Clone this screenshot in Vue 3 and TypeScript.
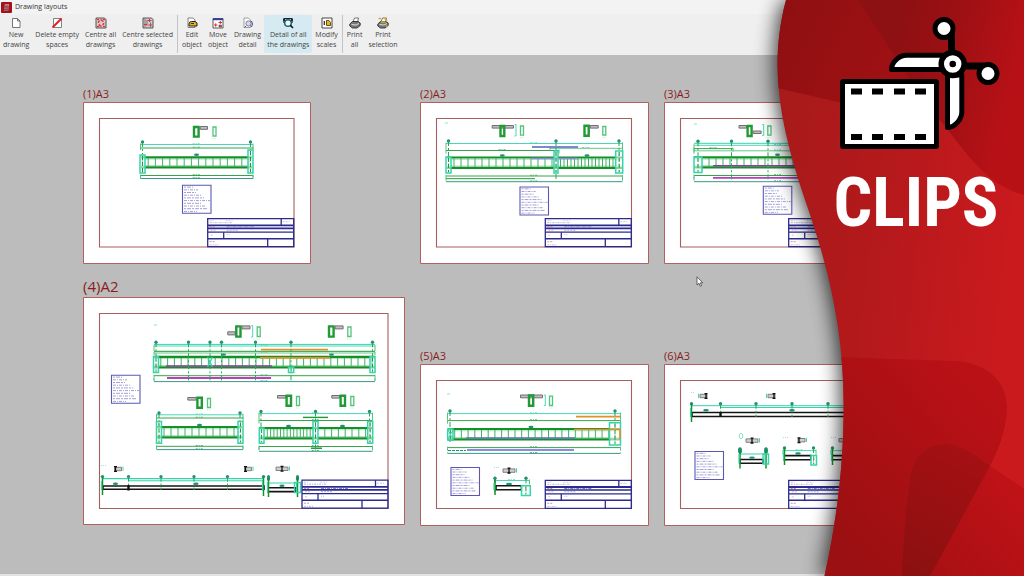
<script setup lang="ts">
interface Shape {
  d: string
  c: string
  w?: number
  f?: string
  dash?: string
}

interface Sheet {
  name: string
  large?: boolean
  x: number
  y: number
  w: number
  h: number
  shapes: Shape[]
}

interface Tool {
  icon: string
  lines: [string, string]
  active?: boolean
}

const GREEN = '#1f9a34'
const DARK = '#159027'
const LIGHT = '#52c47b'
const AQUA = '#35d3ae'
const TEAL = '#1f8f78'
const NAVY = '#2b2b8f'
const INK = '#a3a1d6'
const MAGENTA = '#b93fc0'
const ORANGE = '#e0902c'
const VIOLET = '#8b8be0'

const canvasTop = 55

const box = (x1: number, y1: number, x2: number, y2: number) => `M${x1} ${y1}H${x2}V${y2}H${x1}Z`

function hline(x1: number, x2: number, y: number, c: string, w = 1, dash?: string): Shape {
  return { d: `M${x1} ${y}H${x2}`, c, w, dash }
}

function vline(x: number, y1: number, y2: number, c: string, w = 1, dash?: string): Shape {
  return { d: `M${x} ${y1}V${y2}`, c, w, dash }
}

function dot(x: number, y: number, rx = 1.7, ry = 1.7): Shape {
  return { d: `M${x - rx} ${y}a${rx} ${ry} 0 1 0 ${rx * 2} 0a${rx} ${ry} 0 1 0 ${-rx * 2} 0Z`, c: 'none', f: TEAL }
}

function ticks(x1: number, x2: number, y1: number, y2: number, step: number): Shape {
  let d = ''
  for (let x = x1 + step; x < x2 - 1; x += step) d += `M${x.toFixed(1)} ${y1}V${y2}`
  return { d, c: '#3fb364', w: 1 }
}

function girder(x1: number, x2: number, y1: number, y2: number): Shape[] {
  return [
    hline(x1, x2, y1, DARK, 2.2),
    hline(x1, x2, y1 + 1.8, '#8ad79f', 0.7),
    hline(x1, x2, y2 - 1.8, '#8ad79f', 0.7),
    hline(x1, x2, y2, DARK, 2.2),
  ]
}

function plates(...list: [number, number, number, number][]): Shape[] {
  return list.flatMap(([x1, y1, x2, y2]) => [
    { d: box(x1, y1, x2, y2), c: AQUA, w: 1.5, f: 'rgba(255,255,255,.55)' },
    vline((x1 + x2) / 2, y1 + 1, y2 - 1, GREEN, 1, '4 2'),
  ])
}

function marks(y: number, bottom: number, xs: number[]): Shape[] {
  return xs.flatMap((x) => [dot(x, y), vline(x, y, bottom, '#2ba654', 1, '5 2 2 2')])
}

/* A dimension line with end stops and a small caption in the middle. */
function dim(x1: number, x2: number, y: number, c: string, drop = 3): Shape[] {
  const m = (x1 + x2) / 2
  return [
    hline(x1, x2, y, c, 0.9),
    vline(x1, y - 1, y + drop, LIGHT, 1),
    vline(x2, y - 1, y + drop, LIGHT, 1),
    hline(m - 4, m + 4, y - 0.8, c, 0.7, '2 1 1 1'),
  ]
}

function section(x1: number, x2: number, y1: number, y2: number): Shape {
  return { d: box(x1 + 1, y1 + 1, x2 - 1, y2 - 1), c: GREEN, w: 2.4 }
}

function flange(x1: number, x2: number, y1: number, y2: number): Shape {
  return { d: box(x1 + 0.5, y1 + 0.5, x2 - 0.5, y2 - 0.5), c: '#6f6f6f', w: 1, f: '#c4bcc4' }
}

function slot(x1: number, x2: number, y1: number, y2: number): Shape[] {
  return [
    { d: box(x1 + 0.5, y1 + 0.5, x2 - 0.5, y2 - 0.5), c: LIGHT, w: 1.3 },
    hline(x1, x2, y2 + 2, '#b9dcc4', 0.8, '1 1'),
  ]
}

function bracket(x: number, y1: number, y2: number): Shape {
  return { d: `M${x - 1.5} ${y1}H${x}V${y2}H${x - 1.5}`, c: AQUA, w: 0.9 }
}

function rail(x1: number, x2: number, y1: number, y2: number): Shape {
  return { d: box(x1, y1, x2, y2), c: '#151515', w: 1.6, f: '#fff' }
}

function post(x: number, y1: number, y2: number): Shape[] {
  return [vline(x, y1, y2, DARK, 1.5), vline(x - 1, y1 + 4, y2 - 5, AQUA, 1.2)]
}

function clamp(x: number, y: number, side: -1 | 0 | 1): Shape[] {
  const left = side === 1 ? x - 1 : x - 6
  const right = side === -1 ? x + 1 : x + 6
  return [
    { d: box(left, y - 1.7, right, y + 1.7), c: '#777', w: 0.9, f: '#d0d0d0' },
    { d: `M${x - 1.5} ${y - 2.4}H${x + 1.5}M${x} ${y - 2.4}V${y + 2.4}M${x - 1.5} ${y + 2.4}H${x + 1.5}`, c: '#111', w: 1.3 },
    vline(side === -1 ? left - 1.5 : right + 1.5, y - 2.5, y + 2, AQUA, 0.9),
  ]
}

function note(x: number, y: number): Shape[] {
  const widths = [9, 14, 12, 17, 20, 26, 17, 21, 23, 13]
  return [
    { d: box(x, y, x + 28.5, y + 28), c: '#5a58b4', w: 1.1 },
    ...widths.map((w, i) => hline(x + 1.5, x + 1.5 + w, y + 1.8 + i * 2.7, INK, 1, i % 2 ? '3 1 1 1' : '2 1 4 1')),
  ]
}

/* Title block, placed by the bottom right corner of the frame. */
function titleBlock(r: number, b: number): Shape[] {
  const l = r - 86
  return [
    { d: box(l, b - 28, r, b), c: NAVY, w: 1.3 },
    hline(l, r, b - 21.3, NAVY, 1.8),
    hline(l, r, b - 18.3, NAVY, 1.6),
    hline(l, r, b - 14.5, NAVY, 1.2),
    hline(l, r, b - 8, NAVY, 1.5),
    vline(r - 12.5, b - 28, b - 21, NAVY, 1.3),
    vline(l + 16, b - 14.5, b - 8, NAVY, 1.3),
    vline(r - 26, b - 8, b, NAVY, 1.3),
    hline(l + 2, l + 6, b - 26, '#d8b3be', 0.8, '2 1'),
    hline(l + 18, l + 25, b - 26, '#d4bfd2', 0.8, '2 1'),
    hline(l + 2, l + 24, b - 24, INK, 0.8, '2 1 1 1'),
    hline(r - 11, r - 4, b - 25, '#cbb5cb', 0.8, '2 1'),
    hline(l + 2, l + 8, b - 19.8, '#c06080', 0.8, '2 1'),
    hline(l + 19, l + 47, b - 19.8, '#8a78bc', 1, '3 1 1 1'),
    hline(l + 3, l + 8, b - 16.5, '#c8a4bc', 0.8, '2 1'),
    hline(l + 19, l + 30, b - 16.5, INK, 0.9, '2 1'),
    hline(l + 3, l + 6, b - 11.5, '#d8b3be', 0.8, '2 1'),
    hline(l + 19, l + 23, b - 12, INK, 0.7, '1 1'),
    hline(l + 2, l + 8, b - 5, '#cf8aa2', 0.9, '2 1'),
    hline(l + 2, l + 11, b - 1.8, INK, 0.7, '2 1 1 1'),
  ]
}

function frame(x: number, y: number, w: number, h: number, right: number, bottom: number): Shape[] {
  return [
    { d: box(x + 0.5, y + 0.5, x + w - 0.5, y + h - 0.5), c: '#b2605f', w: 1, f: '#fff' },
    { d: box(x + 16.5, y + 16.5, right, bottom), c: '#a55f5f', w: 1.1 },
  ]
}

const sheets: Sheet[] = [
  {
    name: '(1)A3', x: 83, y: 102, w: 228, h: 162,
    shapes: [
      ...frame(83, 102, 228, 162, 294, 247),
      ...girder(141, 252, 157.3, 167.3), ticks(141, 252, 158, 167, 7.2),
      ...dim(140.5, 253, 144.5, AQUA, 4), ...dim(140.5, 253, 148, GREEN, 2),
      ...dim(140.5, 253, 175.5, GREEN), ...dim(140.5, 253, 178.5, TEAL, -3),
      ...marks(142, 173, [142.5, 250.5]),
      ...plates([140, 155, 145, 173], [248, 150, 253, 173]),
      section(193, 199.6, 126, 137.6), flange(199.6, 208, 126, 129.8), ...slot(212.5, 216.5, 126.5, 136.5),
      dot(196.5, 154.7, 2.5, 1.2),
      ...note(182.5, 185.3), ...titleBlock(293.7, 246.7),
    ],
  },
  {
    name: '(2)A3', x: 420, y: 102, w: 229, h: 162,
    shapes: [
      ...frame(420, 102, 229, 162, 631.5, 247),
      ...girder(447, 622, 157.5, 167.8), ticks(447, 554, 158, 167, 7), ticks(557, 616, 158, 167, 3.5),
      ...dim(446, 622.5, 143.5, AQUA, 6), ...dim(446, 559, 150.5, GREEN, 3), ...dim(550, 622.5, 148.3, LIGHT, 3),
      hline(532, 578, 147, '#5560c0', 1.6), hline(531, 578, 158.5, VIOLET, 1.4),
      ...dim(446, 622.5, 176, GREEN), hline(446, 535, 178.7, GREEN, 1), ...dim(446, 622.5, 181.7, TEAL, -3),
      ...marks(141, 173, [448.5, 619]), ...marks(141, 181, [556]),
      ...plates([446, 157, 451, 173], [554, 151, 558, 173], [615.7, 151, 622.7, 173]),
      flange(491.7, 514, 125, 128.6), section(499.5, 505.3, 125, 137), bracket(516, 124.5, 136), ...slot(520, 524, 125.5, 135.7),
      section(583.5, 589.7, 124.7, 136.8), flange(589.7, 598.7, 125, 128.6), ...slot(602.3, 606.3, 126, 135.5),
      dot(502.3, 155.5, 2.5, 1.2), dot(587, 155.5, 2.5, 1.2),
      hline(445, 448, 123, AQUA, 0.6),
      ...note(520, 187), ...titleBlock(631.3, 246.7),
    ],
  },
  {
    name: '(3)A3', x: 664, y: 102, w: 228, h: 162,
    shapes: [
      ...frame(664, 102, 228, 162, 875, 247),
      ...girder(694, 862, 157.3, 167.3), ticks(702, 862, 158, 167, 7),
      hline(694, 862, 143.3, AQUA, 1), ...dim(694, 862, 145.3, AQUA, 5), ...dim(694, 733, 148.6, GREEN, 3), ...dim(694, 862, 150.8, LIGHT, 3),
      hline(713, 862, 165.7, '#9838a8', 1.6), hline(713, 862, 177.8, MAGENTA, 1.8),
      ...dim(694, 862, 175.5, GREEN), ...dim(694, 862, 181.7, TEAL, -5),
      ...marks(141.3, 172, [698]), ...marks(141.3, 181, [731.5, 768]),
      ...plates([694, 157, 702, 172.5]),
      flange(738.5, 747, 125, 128.6), section(746.6, 752.6, 125, 137), flange(752.6, 761.6, 130.5, 134), bracket(763.7, 124.5, 135.5), ...slot(767.3, 771.5, 125.5, 135.7),
      dot(777.5, 154.7, 2.5, 1.2), hline(694, 697, 124, AQUA, 0.6),
      ...note(763.3, 186.3), ...titleBlock(874.7, 246.7),
    ],
  },
  {
    name: '(4)A2', large: true, x: 83, y: 297, w: 322, h: 228,
    shapes: [
      ...frame(83, 297, 322, 228, 388, 508.5),
      ...girder(154, 375, 356.8, 367.3), ticks(154, 375, 358, 367, 6.8),
      hline(154, 375, 344.4, AQUA, 1), ...dim(154, 375, 346, AQUA, 5), hline(154, 375, 351.3, GREEN, 1), ...dim(154, 375, 353, LIGHT, 2),
      hline(261, 328, 349.7, ORANGE, 1.7), hline(260, 330, 357.8, ORANGE, 1.7),
      hline(166, 272, 366, '#9838a8', 1.7), hline(167, 271, 378, MAGENTA, 1.8),
      ...dim(154, 375, 375.7, GREEN, 5), ...dim(154, 375, 381.6, TEAL, -3),
      ...marks(342.3, 372, [156, 372.5]), ...marks(342.3, 381, [188.5, 210, 221.5, 255.5, 291]),
      ...plates([153.5, 356.5, 158.5, 372.5], [370, 356.5, 375, 372.5], [288.5, 367.5, 293.7, 372.5]),
      { d: 'M207.5 357L212.5 367M212.5 357L207.5 367', c: AQUA, w: 1.2 },
      flange(227.3, 235.7, 331.3, 335.4), section(235.3, 241.5, 325.4, 337.6), flange(241.5, 250.5, 325.4, 329.4), bracket(252.7, 325.5, 337), ...slot(256.7, 260.7, 326.5, 337),
      section(328, 334.6, 325.4, 337.6), flange(334.6, 343.6, 325.4, 329.4), ...slot(347.3, 351.5, 326.5, 337),
      dot(223.5, 354.6, 2.5, 1.2), dot(331.5, 354.6, 2.5, 1.2), hline(154, 157, 325, AQUA, 0.6),

      ...girder(157, 242, 427, 437.4), ticks(157, 242, 428, 437, 7),
      ...dim(156.5, 243, 414.8, AQUA, 4), ...dim(156.5, 243, 418, GREEN, 3), ...dim(156.5, 243, 446.3, GREEN), ...dim(156.5, 243, 449.6, TEAL, -3),
      ...marks(413, 443, [159, 240]),
      ...plates([156.5, 421.5, 161.5, 443.3], [238, 421.5, 243, 443.3]),
      flange(187.3, 196.7, 397, 400.6), section(196.4, 202.8, 396.7, 408.7), ...slot(207, 211, 398, 408), dot(199.5, 425, 2.5, 1.2),

      ...girder(259, 372, 428, 438.3), ticks(264, 313, 429, 438, 3.3), ticks(318, 368, 429, 438, 6.8),
      ...dim(259, 372.5, 413.6, AQUA, 6), hline(303, 328, 417.4, GREEN, 1.4), ...dim(259, 372.5, 420.5, GREEN, 3),
      ...dim(259, 372.5, 446.5, GREEN), hline(311, 322, 448.2, DARK, 1.4), ...dim(259, 372.5, 451.3, TEAL, -4),
      ...marks(411.5, 443, [261, 369.5]), ...marks(411.5, 451, [315.5]),
      ...plates([259.3, 428, 264, 443.3], [313, 421.5, 318, 443.3], [367.7, 421.5, 372.7, 443.3]),
      flange(277, 286, 395, 398.6), section(285.6, 292, 394.7, 406.8), ...slot(296, 300, 396, 406),
      flange(331.3, 340, 395, 398.6), section(339.6, 346, 394.7, 406.8), ...slot(350.3, 354.3, 396, 406),
      dot(288.5, 426, 2.5, 1.2), dot(342.5, 426, 2.5, 1.2),

      hline(102, 264, 478.6, AQUA, 1.1), hline(128, 264, 480.7, AQUA, 1.1),
      rail(103, 264, 486, 489.3), dot(115.5, 483.7, 2.6, 1.3), dot(196, 483.7, 2.6, 1.3),
      ...marks(476.6, 490, [102.5, 128.5, 161, 194, 227.5, 263.5]),
      ...post(102.5, 477, 495), ...post(263.5, 477, 496), vline(128.5, 485, 490.5, '#111', 2.4),
      ...clamp(115.5, 469, 1), ...clamp(245.5, 469, 1),
      hline(101, 106, 465.6, '#9bd8c8', 0.8, '1 1'),
      hline(268, 297, 483, AQUA, 1), rail(268, 296, 487.7, 491.6), dot(282, 485.7, 2.6, 1.2),
      dot(268.5, 478, 1.6, 3), dot(297.5, 478, 1.6, 3), ...post(268.5, 478, 497), ...post(297.5, 478, 497),
      { d: box(294.5, 482.5, 300.5, 492.5), c: AQUA, w: 1.4 },
      ...clamp(282, 468.8, 0),
      ...note(111.5, 375.3), ...titleBlock(388, 508.2),
    ],
  },
  {
    name: '(5)A3', x: 420, y: 364, w: 229, h: 162,
    shapes: [
      ...frame(420, 364, 229, 162, 631.5, 508.5),
      ...girder(448, 620, 429, 439.3), ticks(448, 610, 430, 439, 6.7),
      ...dim(447.5, 620.5, 413.6, AQUA, 6), ...dim(447.5, 620.5, 420.6, GREEN, 3),
      hline(576, 620, 416.6, ORANGE, 1.6), hline(466, 575, 438, '#6a70c8', 1.4),
      ...dim(447.5, 620.5, 447.6, GREEN), hline(467, 574, 450, VIOLET, 1.8), hline(448, 466, 450.5, TEAL, 1, '3 1'), ...dim(447.5, 620.5, 453.4, TEAL, 0),
      ...marks(411, 443, [450, 615]),
      ...plates([447.7, 429, 453, 440], [609.5, 422.7, 620.5, 445]),
      { d: 'M574 429.5H620V439', c: ORANGE, w: 1.7 },
      { d: 'M448 430L453 439M453 430L448 439', c: AQUA, w: 1 },
      flange(520, 543, 394.5, 398.3), section(528, 534.2, 394.5, 406.7), bracket(545.3, 395, 405.5), ...slot(549, 553, 395.7, 406),
      dot(531, 427, 2.5, 1.3), hline(447, 450, 394, AQUA, 0.6),
      ...dim(494.5, 529.5, 480.5, AQUA, 4), rail(496, 521.5, 485.7, 489.7), dot(509, 484, 3, 1.2),
      ...marks(478.3, 492, [495, 526]), ...post(495, 479, 495),
      ...plates([521.5, 485.7, 530.3, 495.5]),
      ...clamp(509, 470.6, 0), hline(494, 499, 467.5, '#9bd8c8', 0.8, '1 1'),
      ...note(451, 467.5), ...titleBlock(631.3, 508.3),
    ],
  },
  {
    name: '(6)A3', x: 664, y: 364, w: 228, h: 162,
    shapes: [
      ...frame(664, 364, 228, 162, 875, 508.5),
      hline(691, 862, 405.7, AQUA, 1), hline(720, 862, 407.5, AQUA, 1.2),
      rail(692, 862, 412.5, 416.5), dot(706, 410.3, 2.8, 1.3), dot(792, 410.3, 2.8, 1.3),
      ...marks(403.7, 417, [691.5, 720.5, 756, 792, 828]),
      ...post(691.5, 404, 422), vline(720.5, 412, 417, '#111', 2.4),
      ...clamp(706, 396, -1), ...clamp(774, 396, -1), hline(691, 695, 392.5, '#9bd8c8', 0.8, '1 1'),
      hline(740, 768, 454, AQUA, 1), rail(740, 763, 459.5, 463.3), dot(752, 457.6, 2.8, 1.2),
      dot(740, 450.5, 2, 3.2), dot(766, 450.5, 2, 3.2), ...post(740, 450, 468.5), ...post(766, 450, 468.5),
      { d: box(763, 454, 768.5, 464), c: AQUA, w: 1.4 },
      ...clamp(752, 440.6, 0), { d: 'M739.5 436a1.7 1.7 0 1 0 3 0a1.7 1.7 0 1 0 -3 0', c: AQUA, w: 0.7 },
      ...dim(783, 816, 450.6, AQUA, 4), rail(784, 811, 455.6, 459.7), dot(798, 453.5, 2.8, 1.2),
      ...marks(448, 462, [784.5, 813.5]), ...post(784.5, 448, 465),
      ...plates([811, 455.5, 816.5, 465]),
      ...clamp(799, 440.2, 1), hline(783, 788, 437.5, '#9bd8c8', 0.8, '1 1'),
      ...dim(831, 864, 450.6, AQUA, 4), rail(832, 859, 455.6, 459.7), ...marks(448, 462, [832.5]), ...post(832.5, 448, 465),
      ...clamp(845, 440.2, 0), hline(831, 836, 437.5, '#9bd8c8', 0.8, '1 1'),
      ...note(695, 451.5), ...titleBlock(874.7, 508.3),
    ],
  },
]

const groups: Tool[][] = [
  [
    { icon: 'new', lines: ['New', 'drawing'] },
    { icon: 'delete', lines: ['Delete empty', 'spaces'] },
    { icon: 'centre', lines: ['Centre all', 'drawings'] },
    { icon: 'selected', lines: ['Centre selected', 'drawings'] },
  ],
  [
    { icon: 'edit', lines: ['Edit', 'object'] },
    { icon: 'move', lines: ['Move', 'object'] },
    { icon: 'detail', lines: ['Drawing', 'detail'] },
    { icon: 'all', lines: ['Detail of all', 'the drawings'], active: true },
    { icon: 'scales', lines: ['Modify', 'scales'] },
  ],
  [
    { icon: 'print', lines: ['Print', 'all'] },
    { icon: 'printsel', lines: ['Print', 'selection'] },
  ],
]

const holes = [851, 872, 894, 915]
</script>

<template>
  <div class="app">
    <header class="titlebar">
      <svg class="logo" viewBox="0 0 12 12" aria-hidden="true">
        <rect width="12" height="12" rx="1" fill="#a3121c" />
        <path d="M4 2.5h5l-1 7h-5z" fill="#d8a0a4" />
        <path d="M3.5 4.5h5M3.5 6.5h5M3 8.5h5" stroke="#7a0d14" stroke-width="1" />
      </svg>
      <h1>Drawing layouts</h1>
    </header>

    <nav class="toolbar" aria-label="Drawing tools">
      <div v-for="(group, g) in groups" :key="g" class="group">
        <button v-for="tool in group" :key="tool.icon" type="button" class="tool" :class="{ active: tool.active }">
          <svg viewBox="0 0 12 12" aria-hidden="true">
            <path v-if="tool.icon === 'new'" d="M2.5 1.5h5l2.500 2.500v6.500h-7.500zM7.500 1.500v2.500h2.500" fill="#fff" stroke="#555" stroke-width=".8" />
            <g v-else-if="tool.icon === 'delete'">
              <path d="M2.500 1.500h8v9h-8z" fill="#fff" stroke="#666" stroke-width=".8" />
              <path d="M1.500 10.500L10.500 1.500" stroke="#e01e28" stroke-width="2" />
            </g>
            <g v-else-if="tool.icon === 'centre' || tool.icon === 'selected'">
              <path d="M1 1h8.500l1.500 1.500v8.500h-10z" fill="#d9c9c9" stroke="#444" stroke-width=".9" />
              <g v-if="tool.icon === 'centre'">
                <circle cx="6" cy="6" r="2.700" fill="none" stroke="#e2343c" stroke-width="1.500" stroke-dasharray="2.500 1.700" />
                <path d="M2 2.500h2M8 2.500h2M2 9.500h2M8 9.500h2M6 2v1.500M6 8.500v1.500" stroke="#d8303a" />
              </g>
              <g v-else>
                <path d="M3 2v8M5 3v6M8.500 5.500v5" stroke="#777" />
                <path d="M5.500 3.500h4M7.500 2v3M2 7.500h3M6.500 8h3.500" stroke="#d8303a" />
              </g>
            </g>
            <g v-else-if="tool.icon === 'edit'">
              <path d="M2 1h5l2 2v7.500h-7z" fill="#fff" stroke="#666" stroke-width=".8" />
              <path d="M3 9V7q0-2.500 2.500-2.500h3.500l2 1.500v3z" fill="#e5b422" stroke="#222" stroke-width="1" />
              <path d="M5 6.500h3" stroke="#3a2c00" />
            </g>
            <g v-else-if="tool.icon === 'move'">
              <path d="M1 1.500h10v9.500h-10z" fill="#fff" stroke="#333" stroke-width=".8" />
              <path d="M1 2.300h10" stroke="#2b3fa8" stroke-width="1.800" />
              <path d="M2 8h3.500M3.700 6.300v3.500M6.500 5.500h3.500M8.300 4v3" stroke="#e02c34" />
              <path d="M7 8h2.500v2h-2.500z" fill="#e0525a" stroke="#444" stroke-width=".6" />
            </g>
            <g v-else-if="tool.icon === 'detail'">
              <path d="M2 1h4.500l2 2v7.500h-6.500z" fill="#fff" stroke="#888" stroke-width=".8" />
              <circle cx="6.500" cy="6.500" r="2.600" fill="#d9d9ee" stroke="#7a7a9a" />
              <path d="M4 9l-1.500 1.500M9.500 4q2 3 0 6" stroke="#4a4a8a" fill="none" />
            </g>
            <g v-else-if="tool.icon === 'all'">
              <path d="M2 1.500h8v4h-8z" fill="#d8e4ea" stroke="#223" stroke-width="1.200" />
              <circle cx="6" cy="6" r="3.300" fill="#e8fbff" stroke="#24606c" stroke-width="1.500" />
              <path d="M8.300 8.300l2.700 2.700M1 3h2M9 3h2" stroke="#111" stroke-width="1.600" />
            </g>
            <g v-else-if="tool.icon === 'scales'">
              <path d="M1 1h10v10h-10z" fill="#fff" stroke="#333" stroke-width=".9" />
              <path d="M3.300 4v4" stroke="#222" stroke-width="1.200" />
              <path d="M5.500 3.500h2.500l1.500 2v3h-4z" fill="#e5b422" stroke="#5a4300" stroke-width=".9" />
            </g>
            <g v-else>
              <path d="M4 5l1.500-4h4l-1 4z" fill="#fff" stroke="#555" stroke-width=".8" />
              <path d="M.8 7l2.700-2.500h5.500l2.200 1.500v2.500l-3.200 2.500h-4.500l-2.700-2z" fill="#777" stroke="#222" stroke-width=".8" />
              <path d="M2.500 7.500l4.500 .5l3-1.500" stroke="#ddd" fill="none" />
              <path v-if="tool.icon === 'printsel'" d="M1.500 1.500h2.500M7.500 1.500l2.500 2.500M4 5h4.500M9 9h1.500" stroke="#d8b020" stroke-width="1.400" />
            </g>
          </svg>
          <span>{{ tool.lines[0] }}<br />{{ tool.lines[1] }}</span>
        </button>
      </div>
    </nav>

    <main class="canvas">
      <figure
        v-for="sheet in sheets"
        :key="sheet.name"
        class="sheet"
        :class="{ large: sheet.large }"
        :style="{ left: sheet.x + 'px', top: sheet.y - canvasTop + 'px' }"
      >
        <figcaption>{{ sheet.name }}</figcaption>
        <svg :width="sheet.w" :height="sheet.h" :viewBox="`${sheet.x} ${sheet.y} ${sheet.w} ${sheet.h}`" aria-hidden="true">
          <path
            v-for="(s, i) in sheet.shapes"
            :key="i"
            :d="s.d"
            :stroke="s.c"
            :stroke-width="s.w ?? 1"
            :fill="s.f ?? 'none'"
            :stroke-dasharray="s.dash"
          />
        </svg>
      </figure>
      <svg class="pointer" viewBox="0 0 8 12" aria-hidden="true">
        <path d="M1 .8v8.200l2-1.700 1.300 3 1.300-.6-1.300-2.900h2.500z" fill="#fff" stroke="#444" stroke-width=".8" />
      </svg>
    </main>

    <aside class="panel" aria-label="Clips">
      <svg viewBox="724 0 300 576">
        <defs>
          <path id="body" d="M786 0C780 22 777.500 45 777.500 65C777.500 110 790 155 805 200C828 265 843.700 330 843.700 405C843.700 460 838 515 824.500 576H1024V0Z" />
          <clipPath id="clip"><use href="#body" /></clipPath>
          <filter id="soft" x="-40%" y="-10%" width="180%" height="120%"><feGaussianBlur stdDeviation="10" /></filter>
          <linearGradient id="base" x1="780" x2="1024" y1="200" y2="230" gradientUnits="userSpaceOnUse">
            <stop offset="0" stop-color="#a91a1b" /><stop offset=".35" stop-color="#b2191b" /><stop offset="1" stop-color="#cb1a1e" />
          </linearGradient>
          <linearGradient id="top" x1="778" x2="940" y1="20" y2="100" gradientUnits="userSpaceOnUse">
            <stop offset="0" stop-color="#8f1012" /><stop offset="1" stop-color="#a61114" />
          </linearGradient>
          <linearGradient id="ridge" x1="890" x2="1015" y1="50" y2="80" gradientUnits="userSpaceOnUse">
            <stop offset="0" stop-color="#8d1012" /><stop offset=".4" stop-color="#9a1013" /><stop offset="1" stop-color="#b71116" />
          </linearGradient>
          <linearGradient id="low" x1="840" x2="1000" y1="540" y2="400" gradientUnits="userSpaceOnUse">
            <stop offset="0" stop-color="#9b1012" /><stop offset=".5" stop-color="#ab1014" /><stop offset="1" stop-color="#ba1116" />
          </linearGradient>
          <linearGradient id="leaf" x1="915" x2="975" y1="570" y2="450" gradientUnits="userSpaceOnUse">
            <stop offset="0" stop-color="#8d1011" /><stop offset="1" stop-color="#a51013" />
          </linearGradient>
          <linearGradient id="corner" x1="930" x2="1020" y1="576" y2="490" gradientUnits="userSpaceOnUse">
            <stop offset="0" stop-color="#a81013" /><stop offset="1" stop-color="#bf1217" />
          </linearGradient>
        </defs>
        <use href="#body" filter="url(#soft)" opacity=".75" x="-3" />
        <g clip-path="url(#clip)">
          <rect x="724" width="300" height="576" fill="url(#base)" />
          <path d="M770 86.500L838 102L938 122L950 0H770Z" fill="url(#top)" />
          <path d="M858 0L912 82L938 118C962 145 982 184 1024 195V0Z" fill="url(#ridge)" />
          <path d="M836 357L955 361C992 363 1008 386 1007 410C1006 432 997 453 990 466L1024 489V576H820Z" fill="url(#low)" />
          <path d="M990 466L1024 489V576H930Z" fill="url(#corner)" />
          <path d="M902 576C903 540 907 500 910 478C915 450 932 444 946 444C962 445 974 454 990 466L930 576Z" fill="url(#leaf)" />
        </g>

        <rect x="842.500" y="81.500" width="94" height="65" rx="1" fill="#fff" stroke="#000" stroke-width="5" stroke-linejoin="round" />
        <g v-for="x in holes" :key="x">
          <rect :x="x" y="88.500" width="11" height="6" />
          <rect :x="x" y="134" width="11" height="6" />
        </g>
        <g stroke="#000" fill="#fff" stroke-width="5" stroke-linejoin="round">
          <path d="M891.500 69.500C891.500 63 898 55.200 907 55.200H944V69.500Z" />
          <path d="M947.500 75V127.500C955 127.500 961.800 119 961.800 112V75Z" />
          <path d="M951.500 32V56M960 66H984" stroke-width="7" />
          <circle cx="944" cy="28.500" r="9" />
          <circle cx="988" cy="73.500" r="9" />
          <circle cx="952.700" cy="64" r="11.500" stroke-width="5.500" />
        </g>
        <circle cx="952.700" cy="64" r="3.300" />
        <text class="word" x="916" y="226" text-anchor="middle">CLIPS</text>
      </svg>
    </aside>
  </div>
</template>

<style>
body {
  margin: 0;
}
</style>

<style scoped>
.app {
  position: relative;
  display: flex;
  flex-direction: column;
  min-height: 100vh;
  overflow: hidden;
  background: #f0f0f0;
  font-family: "Open Sans", "Noto Sans", sans-serif;
  color: #333;
}

.titlebar {
  display: flex;
  align-items: center;
  gap: 3px;
  height: 14px;
  padding: 0 1px;
  background: #f3f3f3;
}

.logo {
  width: 11px;
  height: 11px;
}

h1 {
  margin: 0;
  font-size: 7px;
  font-weight: 400;
  line-height: 14px;
}

.toolbar {
  display: flex;
  height: 40px;
  padding: 1px 0;
  box-sizing: border-box;
  background: #efefef;
}

.group {
  display: flex;
}

.group + .group {
  margin-left: 1px;
  padding-left: 1px;
  border-left: 1px solid #c4c4c4;
}

.tool {
  display: flex;
  flex-direction: column;
  align-items: center;
  gap: 1px;
  padding: 2px 3px 0;
  border: 0;
  border-radius: 2px;
  background: none;
  font: inherit;
  font-size: 7px;
  line-height: 10px;
  text-align: center;
  white-space: nowrap;
  color: #444;
}

.tool svg {
  width: 12px;
  height: 12px;
}

.tool.active {
  background: #d6ebf1;
}

.canvas {
  position: relative;
  flex: 1;
  min-height: 519px;
  margin-top: 1px;
  overflow: hidden;
  background: #bcbcbc;
  border-bottom: 2px solid #e2e2e2;
}

.sheet {
  position: absolute;
  margin: 0;
}

.sheet svg {
  display: block;
}

figcaption {
  position: absolute;
  bottom: 100%;
  font-size: 11px;
  line-height: 16px;
  color: #8a1c1c;
}

.large figcaption {
  font-size: 15px;
  line-height: 22px;
}

.pointer {
  position: absolute;
  left: 696px;
  top: 221px;
  width: 8px;
  height: 12px;
}

.panel {
  position: absolute;
  top: 0;
  right: 0;
  height: 100%;
}

.panel svg {
  display: block;
  height: 100%;
}

.word {
  font-family: "Roboto Condensed", "Liberation Sans Narrow", Roboto, sans-serif;
  font-weight: 700;
  font-size: 68px;
  fill: #fff;
}
</style>
